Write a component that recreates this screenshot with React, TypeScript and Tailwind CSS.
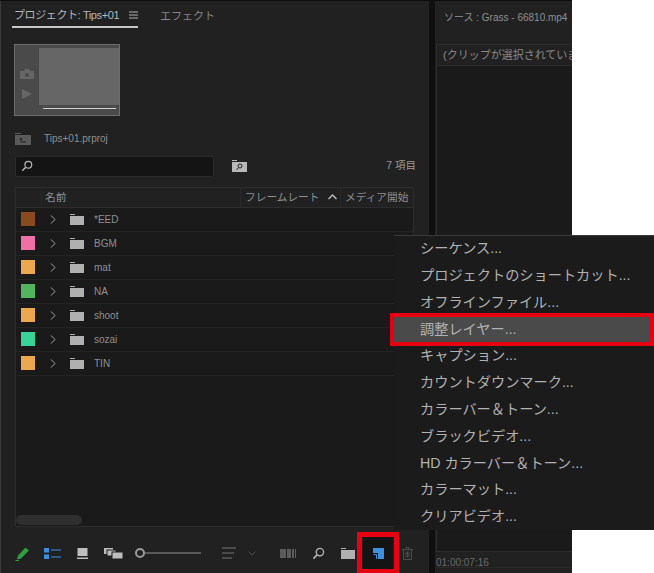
import React from "react";

const font = "font-['Liberation_Sans','Noto_Sans_CJK_JP',sans-serif]";

const rows = [
  { name: "*EED", color: "bg-[#8a4a20]" },
  { name: "BGM", color: "bg-[#f06fa5]" },
  { name: "mat", color: "bg-[#eba84f]" },
  { name: "NA", color: "bg-[#52b45c]" },
  { name: "shoot", color: "bg-[#eba84f]" },
  { name: "sozai", color: "bg-[#37d398]" },
  { name: "TIN", color: "bg-[#eba84f]" },
];

const menuItems = [
  "シーケンス...",
  "プロジェクトのショートカット...",
  "オフラインファイル...",
  "調整レイヤー...",
  "キャプション...",
  "カウントダウンマーク...",
  "カラーバー＆トーン...",
  "ブラックビデオ...",
  "HD カラーバー＆トーン...",
  "カラーマット...",
  "クリアビデオ...",
];

function Folder({ className = "" }: { className?: string }) {
  return (
    <svg width="14" height="11" viewBox="0 0 14 11" className={className}>
      <rect x="0" y="0" width="5" height="1" fill="#b0b0b0" />
      <rect x="0" y="2" width="14" height="9" fill="#b0b0b0" />
    </svg>
  );
}

function Magnifier({ size = 14, color = "#b5b5b5" }: { size?: number; color?: string }) {
  return (
    <svg width={size} height={size} viewBox="0 0 14 14" fill="none" stroke={color}>
      <circle cx="8.5" cy="5.5" r="4" strokeWidth="1.4" />
      <path d="M5.5 8.5L1.5 12.5" strokeWidth="1.8" />
    </svg>
  );
}

function Toolbar() {
  return (
    <div className="flex h-[46px] items-center pt-[6px]">
      {/* pencil */}
      <svg width="15" height="15" viewBox="0 0 15 15" className="mr-[14px]">
        <path d="M3 9.5L10.5 1.5L14 4.5L6 12.5L2 13.5Z" fill="#2f9e3f" />
        <path d="M0.5 14.5H4" stroke="#2f9e3f" />
      </svg>
      {/* list view */}
      <svg width="17" height="11" viewBox="0 0 17 11" className="mr-[16px]">
        <rect x="0" y="0" width="5" height="4.5" fill="#3f8fe0" />
        <rect x="0" y="6.5" width="5" height="4.5" fill="#3f8fe0" />
        <path d="M7 2H17M7 9H17" stroke="#3f8fe0" />
      </svg>
      {/* icon view */}
      <svg width="11" height="11" viewBox="0 0 11 11" className="mr-[16px]">
        <rect x="0.5" y="0" width="10" height="8" fill="#bdbdbd" />
        <rect x="0" y="9.5" width="11" height="1.5" fill="#bdbdbd" />
      </svg>
      {/* freeform view */}
      <svg width="19" height="11" viewBox="0 0 19 11" className="mr-[12px]">
        <rect x="0" y="0" width="9" height="6" fill="#bdbdbd" />
        <rect x="3" y="2" width="9" height="6" fill="#bdbdbd" stroke="#212121" />
        <rect x="8" y="4" width="11" height="7" fill="#bdbdbd" stroke="#212121" />
      </svg>
      {/* zoom slider */}
      <div className="flex w-[70px] items-center">
        <div className="h-[10px] w-[10px] shrink-0 rounded-full border-2 border-[#9a9a9a]" />
        <div className="h-[2px] w-[56px] bg-[#5a5a5a]" />
      </div>
      {/* sort */}
      <svg width="14" height="12" viewBox="0 0 14 12" className="ml-[17px] mr-[12px]">
        <path d="M0 1H14M0 6H12M0 11H10" stroke="#5a5a5a" strokeWidth="1.5" />
      </svg>
      <svg width="8" height="5" viewBox="0 0 8 5" fill="none" className="mr-[24px]">
        <path d="M0.5 0.5L4 4L7.5 0.5" stroke="#4a4a4a" />
      </svg>
      {/* automate */}
      <svg width="16" height="9" viewBox="0 0 16 9" className="mr-[16px]">
        <rect x="0" y="0" width="6" height="9" fill="#5c5c5c" />
        <rect x="7" y="0" width="4" height="9" fill="#5c5c5c" />
        <rect x="12" y="0" width="2" height="9" fill="#5c5c5c" />
        <rect x="15" y="0" width="1" height="9" fill="#5c5c5c" />
      </svg>
      <Magnifier size={13} />
      <Folder className="ml-[16px]" />
      {/* new item */}
      <div className="ml-[8px] flex h-[32px] w-[30px] items-center justify-center bg-[#141414]">
        <svg width="11" height="11" viewBox="0 0 11 11">
          <path d="M0 0H11V11H5V5H0Z" fill="#3f8fe0" />
          <path d="M0.5 6.5H3.5V11" stroke="#3f8fe0" fill="none" />
        </svg>
      </div>
      {/* trash */}
      <svg width="11" height="13" viewBox="0 0 11 13" fill="none" stroke="#4c4c4c" className="ml-[9px]">
        <path d="M0 2.5H11M4 2.5V0.5H7V2.5M1.5 2.5V12.5H9.5V2.5M4 4.5V10.5M5.5 4.5V10.5M7 4.5V10.5" />
      </svg>
    </div>
  );
}

export default function App() {
  return (
    <div className={`${font} relative h-[573px] w-[654px] overflow-hidden bg-white`}>
      <div className="flex h-full w-[572px] border-t-[1px] border-[#0d0d0d] bg-[#111]">
        {/* project panel */}
        <div className="flex w-[429px] shrink-0 flex-col border-l-[1px] border-[#3a3a3a] bg-[#212121] pl-[14px] pr-[15px]">
          <div className="-ml-[3px] flex h-[28px] items-start text-[11px]">
            <div className="flex h-[27px] w-[126px] items-center justify-between border-b-2 border-[#c8c8c8] pl-[2px] pt-[3px] text-[#b8b8b8]">
              <span className="whitespace-nowrap tracking-[-0.4px]">プロジェクト: Tips+01</span>
              <svg width="9" height="8" viewBox="0 0 9 8" className="shrink-0">
                <path d="M0 1H9M0 4H9M0 7H9" stroke="#b0b0b0" />
              </svg>
            </div>
            <span className="ml-[22px] flex h-[27px] items-center pt-[3px] text-[#858585]">エフェクト</span>
          </div>

          {/* thumbnail */}
          <div className="-ml-[1px] mt-[15px] flex h-[72px] w-[106px] flex-col border border-[#6d6d6d] bg-[#4a4a4a]">
            <div className="flex h-[60px]">
              <div className="flex w-[24px] flex-col items-center justify-end gap-[10px] pb-[6px]">
                <svg width="14" height="10" viewBox="0 0 14 10">
                  <path d="M0 2H4L5 0H9L10 2H14V10H0Z" fill="#666" />
                  <circle cx="7" cy="6" r="2" fill="#4a4a4a" />
                </svg>
                <svg width="10" height="10" viewBox="0 0 10 10">
                  <path d="M0 0L10 5L0 10Z" fill="#666" />
                </svg>
              </div>
              <div className="mt-[3px] flex-1 bg-[#666666]" />
            </div>
            <div className="ml-[28px] mr-[3px] mt-[3px] h-[1px] bg-[#d0d0d0]" />
          </div>

          {/* project file */}
          <div className="mt-[16px] flex h-[14px] items-center text-[10px] text-[#8f8f8f]">
            <svg width="16" height="12" viewBox="0 0 16 12" className="mr-[13px]">
              <rect x="0" y="0" width="6" height="1" fill="#5a5a5a" />
              <rect x="0" y="2" width="16" height="10" fill="#5a5a5a" />
              <path d="M6 5V9H11M4.5 6.5L6 5L7.5 6.5" stroke="#212121" fill="none" />
            </svg>
            <span>Tips+01.prproj</span>
          </div>

          {/* search */}
          <div className="mt-[10px] flex h-[21px] items-center">
            <div className="flex h-[21px] w-[199px] items-center rounded-[2px] border border-[#2a2a2a] bg-[#141414] pl-[5px]">
              <Magnifier size={12} />
            </div>
            <svg width="15" height="12" viewBox="0 0 15 12" className="ml-[18px]">
              <rect x="0" y="0" width="5" height="1" fill="#b8b8b8" />
              <rect x="0" y="2" width="15" height="10" fill="#b8b8b8" />
              <circle cx="8" cy="6" r="2" fill="none" stroke="#212121" />
              <path d="M6.5 7.5L4.5 10" stroke="#212121" />
            </svg>
            <span className="-mr-[2px] ml-auto text-[10.5px] text-[#9a9a9a]">7 項目</span>
          </div>

          {/* table */}
          <div className="mt-[10px] flex h-[342px] flex-col border border-[#2c2c2c] bg-[#1a1a1a]">
            <div className="flex h-[20px] shrink-0 items-center border-b border-[#2c2c2c] bg-[#212121] text-[10.7px] text-[#8f8f8f]">
              <div className="h-full w-[26px] border-r border-[#272727]" />
              <span className="w-[198px] pl-[3px]">名前</span>
              <div className="flex h-full w-[100px] items-center border-l border-[#2a2a2a] pl-[4px]">
                <span className="whitespace-nowrap">フレームレート</span>
                <svg width="9" height="6" viewBox="0 0 9 6" fill="none" className="ml-[8px]">
                  <path d="M0.5 5L4.5 1L8.5 5" stroke="#c0c0c0" strokeWidth="1.4" />
                </svg>
              </div>
              <div className="flex h-full flex-1 items-center border-l border-[#2a2a2a] pl-[4px]">
                <span className="whitespace-nowrap">メディア開始</span>
              </div>
            </div>
            <div className="flex-1">
              {rows.map((row) => (
                <div key={row.name} className="flex h-[24px] items-center border-b border-[#242424] text-[10px] text-[#8f8f8f]">
                  <div className={`ml-[5px] h-[14px] w-[14px] ${row.color}`} />
                  <svg width="6" height="9" viewBox="0 0 6 9" fill="none" className="ml-[15px]">
                    <path d="M1 0.5L5 4.5L1 8.5" stroke="#a0a0a0" />
                  </svg>
                  <Folder className="ml-[14px]" />
                  <span className="ml-[10px]">{row.name}</span>
                </div>
              ))}
            </div>
            <div className="mb-[1px] h-[10px] w-[66px] rounded-full bg-[#2f2f2f]" />
          </div>

          <Toolbar />
        </div>

        {/* divider */}
        <div className="w-[6px] shrink-0 bg-[#0f0f0f]" />

        {/* source panel */}
        <div className="flex min-w-0 flex-1 flex-col overflow-hidden bg-[#212121] pl-[1px]">
          <div className="flex h-[28px] items-center whitespace-nowrap pl-[8px] pt-[4px] text-[10px] text-[#8f8f8f]">
            ソース : Grass - 66810.mp4
          </div>
          <div className="mt-[15px] flex-1 border border-r-0 border-[#2c2c2c] bg-[#1a1a1a]">
            <div className="flex h-[21px] items-center whitespace-nowrap border-b border-[#2c2c2c] bg-[#212121] pl-[6px] text-[11px] text-[#8a8a8a]">
              (クリップが選択されていません)
            </div>
          </div>
          <div className="h-[21px] shrink-0">
            <div className="flex h-[16px] items-end border-b border-[#2a2a2a] text-[10px] leading-[9px] text-[#6a6a6a]">
              01:00:07:16
            </div>
          </div>
        </div>
      </div>

      {/* new item popup menu */}
      <div className="absolute left-[394px] top-[235px] h-[295px] w-[260px] border-t border-[#3a3a3a] bg-[#1b1b1b]">
        {menuItems.map((item) => (
          <div
            key={item}
            className={`flex h-[26.8px] items-center whitespace-nowrap pb-[1px] pl-[26px] text-[14.2px] text-[#b2b2b2] ${
              item.startsWith("調整") ? "bg-[#4a4a4a]" : ""
            }`}
          >
            {item}
          </div>
        ))}
      </div>

      {/* red callouts */}
      <div className="absolute left-[390px] top-[313px] h-[33px] w-[264px] border-[4px] border-[#e60012]" />
      <div className="absolute left-[357px] top-[532px] h-[41px] w-[42px] border-[5px] border-b-[4px] border-[#e60012]" />
    </div>
  );
}
